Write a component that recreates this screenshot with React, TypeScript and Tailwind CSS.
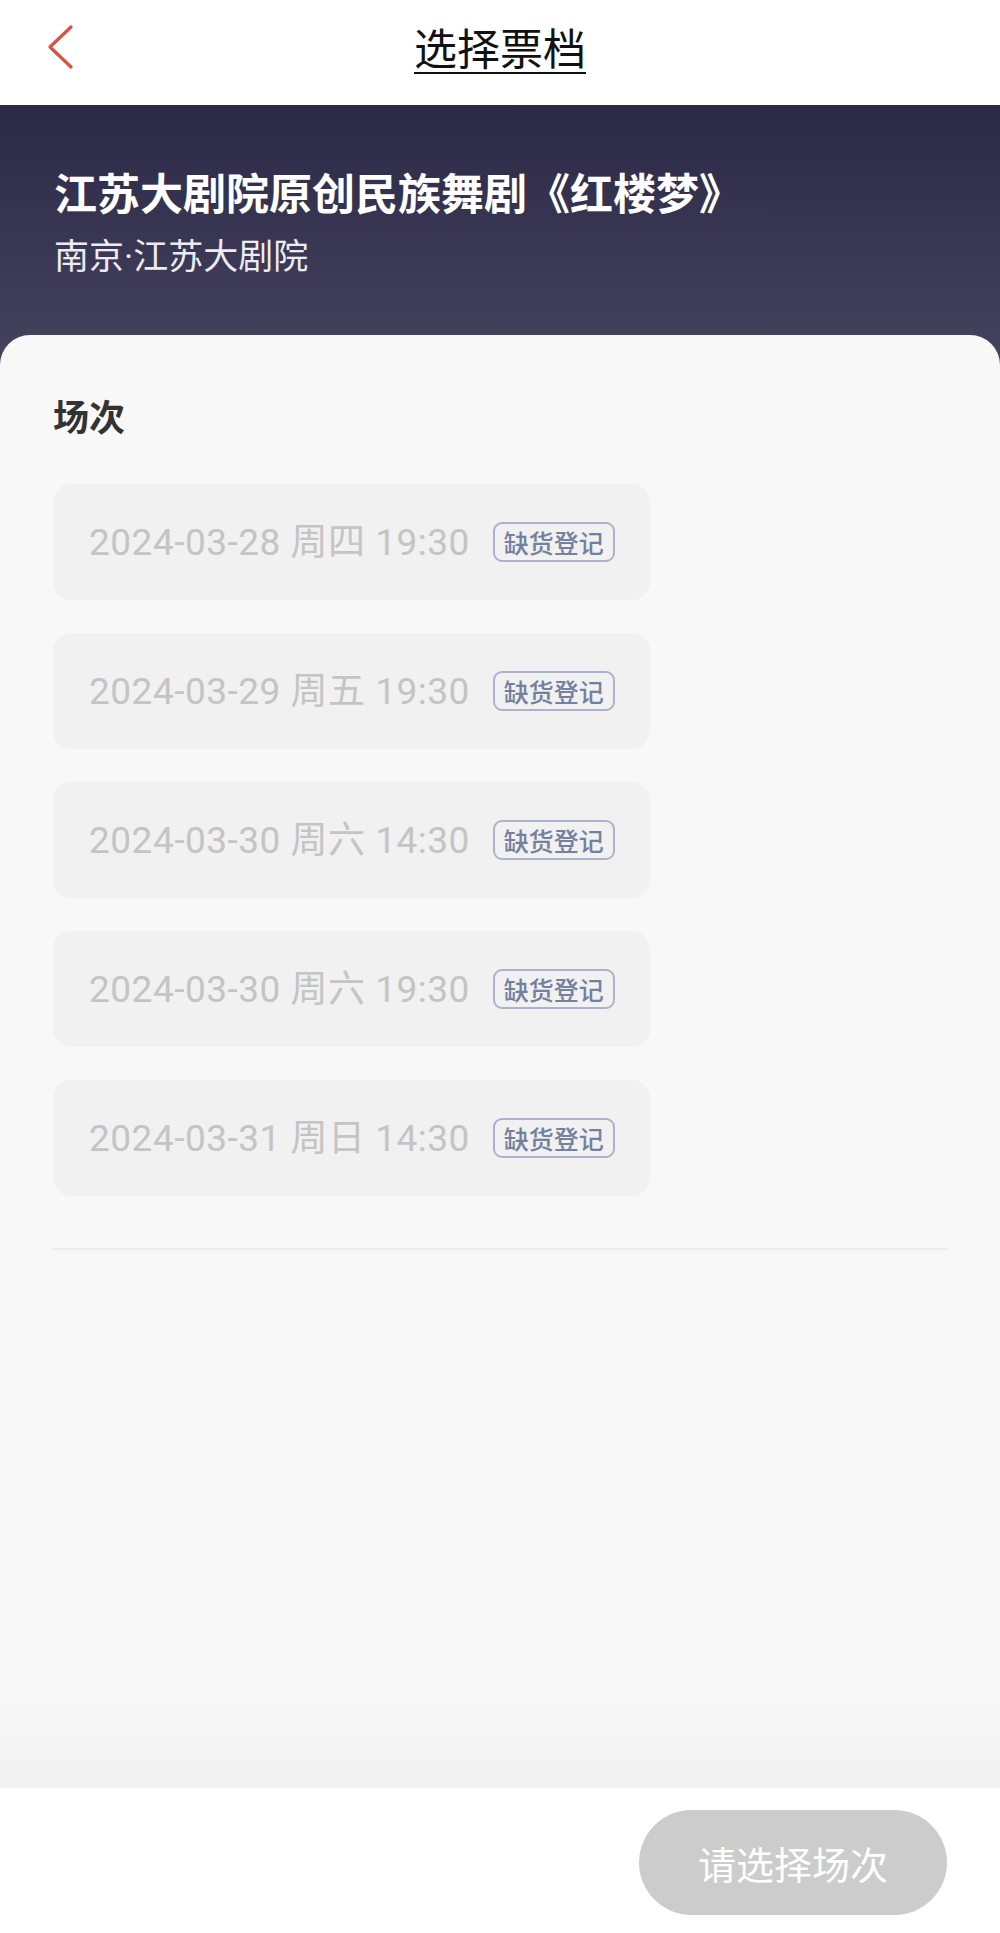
const sessions = [
  { date: '2024-03-28', day: '周四', time: '19:30' },
  { date: '2024-03-29', day: '周五', time: '19:30' },
  { date: '2024-03-30', day: '周六', time: '14:30' },
  { date: '2024-03-30', day: '周六', time: '19:30' },
  { date: '2024-03-31', day: '周日', time: '14:30' },
];

const cjk = "font-['Noto_Sans_CJK_SC',sans-serif]";

function BackIcon() {
  return (
    <svg width="30" height="46" viewBox="0 0 30 46" fill="none">
      <path
        d="M24 2 L3 22 L24 42"
        stroke="#d9513f"
        strokeWidth="3.2"
        strokeLinecap="round"
        strokeLinejoin="round"
      />
    </svg>
  );
}

export default function App() {
  return (
    <div className={`flex h-[1933px] w-[1000px] flex-col overflow-hidden bg-[#f8f8f8] ${cjk}`}>
      {/* nav bar */}
      <header className="relative flex h-[105px] shrink-0 items-center justify-center bg-white pb-[12px]">
        <button className="absolute left-[47px] top-[25px]">
          <BackIcon />
        </button>
        <h1 className="text-[43px] leading-none text-[#111] underline decoration-[2px] underline-offset-[7px]">
          选择票档
        </h1>
      </header>

      {/* show info */}
      <section className="shrink-0 bg-gradient-to-b from-[#2b2946] to-[#46435f] px-[54px] pb-[83px] pt-[58px]">
        <h2 className="text-[43px] font-bold leading-[56px] text-white">
          江苏大剧院原创民族舞剧《红楼梦》
        </h2>
        <p className="mt-[15px] font-['Roboto','Noto_Sans_CJK_SC',sans-serif] text-[35px] leading-[48px] text-[#ecebf2]">
          南京·江苏大剧院
        </p>
      </section>

      {/* sessions */}
      <main className="relative -mt-[30px] flex flex-1 flex-col rounded-t-[30px] bg-[#f8f8f8]">
        <div className="px-[53px] pt-[55px]">
          <h3 className="text-[36px] font-semibold leading-[50px] text-[#333]">场次</h3>
          <div className="mt-[44px] flex flex-col gap-[33px]">
            {sessions.map((s, i) => (
              <div
                key={i}
                className="flex h-[116px] w-[597px] items-center rounded-[18px] bg-[#f1f1f1] pl-[36px]"
              >
                <span className="font-['Roboto','Noto_Sans_CJK_SC',sans-serif] text-[37px] leading-none tracking-[0.5px] text-[#c4c4c4]">
                  {s.date} {s.day} {s.time}
                </span>
                <span className="ml-[23px] flex h-[40px] items-center rounded-[9px] border-2 border-[#aab3cb] px-[9px] text-[25px] font-medium leading-none text-[#7480a0]">
                  缺货登记
                </span>
              </div>
            ))}
          </div>
          <div className="mt-[52px] h-[2px] bg-[#ececec]" />
        </div>
        <div className="flex-1" />
        <div className="h-[88px] bg-gradient-to-b from-[#f8f8f8] to-[#f1f1f1]" />
      </main>

      {/* footer */}
      <footer className="flex h-[145px] shrink-0 items-start justify-end bg-white pr-[53px] pt-[22px]">
        <button className="flex h-[105px] w-[308px] items-center justify-center rounded-full bg-[#cccccc] text-[38px] text-white">
          请选择场次
        </button>
      </footer>
    </div>
  );
}
